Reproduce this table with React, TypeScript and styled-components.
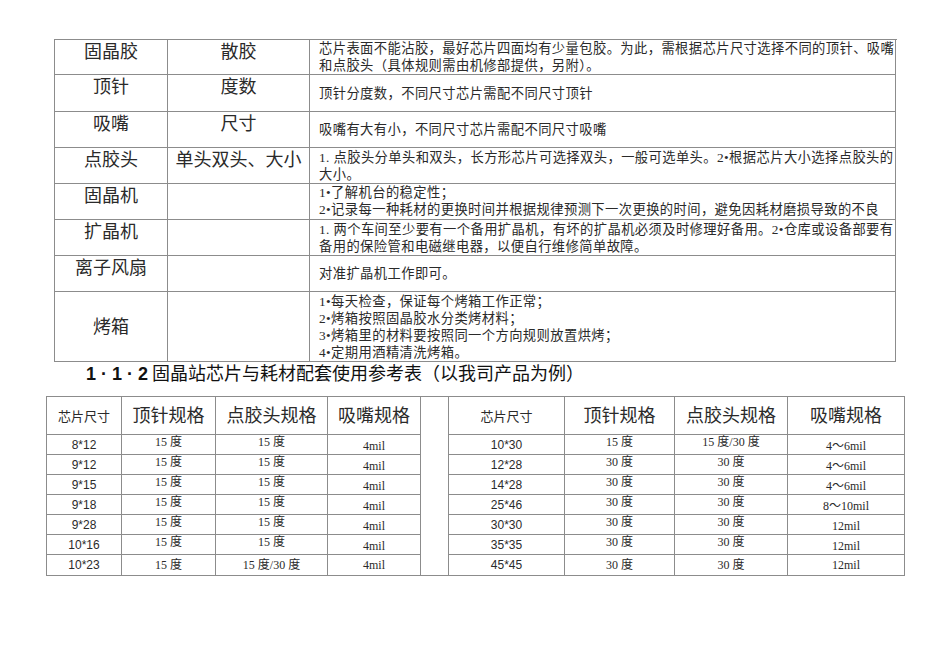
import React from "react";
import styled, { createGlobalStyle } from "styled-components";

const CJK = `"Liberation Serif", "Noto Sans CJK SC", serif`;
const SANS = `"Liberation Sans", "Noto Sans CJK SC", sans-serif`;
const LINE = "#8c8c8c";

const GlobalStyle = createGlobalStyle`
  html, body {
    margin: 0;
    padding: 0;
    background: #ffffff;
  }
  body {
    font-family: ${CJK};
    color: #1a1a1a;
  }
`;

type Rule = {
  item: string;
  param: string;
  lines: string[];
  height: number;
  top?: boolean;
};

const rules: Rule[] = [
  {
    item: "固晶胶",
    param: "散胶",
    height: 35,
    lines: [
      "芯片表面不能沾胶，最好芯片四面均有少量包胶。为此，需根据芯片尺寸选择不同的顶针、吸嘴",
      "和点胶头（具体规则需由机修部提供，另附）。",
    ],
  },
  { item: "顶针", param: "度数", height: 37, lines: ["顶针分度数，不同尺寸芯片需配不同尺寸顶针"] },
  { item: "吸嘴", param: "尺寸", height: 36, lines: ["吸嘴有大有小，不同尺寸芯片需配不同尺寸吸嘴"] },
  {
    item: "点胶头",
    param: "单头双头、大小",
    height: 36,
    lines: [
      "1. 点胶头分单头和双头，长方形芯片可选择双头，一般可选单头。2•根据芯片大小选择点胶头的",
      "大小。",
    ],
  },
  {
    item: "固晶机",
    param: "",
    height: 36,
    top: true,
    lines: [
      "1•了解机台的稳定性；",
      "2•记录每一种耗材的更换时间并根据规律预测下一次更换的时间，避免因耗材磨损导致的不良",
      "品率上升。",
    ],
  },
  {
    item: "扩晶机",
    param: "",
    height: 36,
    lines: [
      "1. 两个车间至少要有一个备用扩晶机，有坏的扩晶机必须及时修理好备用。2•仓库或设备部要有",
      "备用的保险管和电磁继电器，以便自行维修简单故障。",
    ],
  },
  { item: "离子风扇", param: "", height: 36, lines: ["对准扩晶机工作即可。"] },
  {
    item: "烤箱",
    param: "",
    height: 70,
    lines: [
      "1•每天检查，保证每个烤箱工作正常；",
      "2•烤箱按照固晶胶水分类烤材料；",
      "3•烤箱里的材料要按照同一个方向规则放置烘烤；",
      "4•定期用酒精清洗烤箱。",
    ],
  },
];

type Spec = [string, string, string, string];

const leftSpecs: Spec[] = [
  ["8*12", "15 度", "15 度", "4mil"],
  ["9*12", "15 度", "15 度", "4mil"],
  ["9*15", "15 度", "15 度", "4mil"],
  ["9*18", "15 度", "15 度", "4mil"],
  ["9*28", "15 度", "15 度", "4mil"],
  ["10*16", "15 度", "15 度", "4mil"],
  ["10*23", "15 度", "15 度/30 度", "4mil"],
];

const rightSpecs: Spec[] = [
  ["10*30", "15 度", "15 度/30 度", "4～6mil"],
  ["12*28", "30 度", "30 度", "4～6mil"],
  ["14*28", "30 度", "30 度", "4～6mil"],
  ["25*46", "30 度", "30 度", "8～10mil"],
  ["30*30", "30 度", "30 度", "12mil"],
  ["35*35", "30 度", "30 度", "12mil"],
  ["45*45", "30 度", "30 度", "12mil"],
];

const Page = styled.div`
  width: 950px;
  padding-top: 39px;
  padding-bottom: 80px;
`;

const RuleTable = styled.div`
  margin-left: 54px;
  width: 842px;
  border-top: 1px solid ${LINE};
  border-left: 1px solid ${LINE};
`;

const RuleRow = styled.div<{ $h: number }>`
  display: grid;
  grid-template-columns: 113px 142px 586px;
  height: ${(p) => p.$h}px;
  box-sizing: border-box;
`;

const LabelCell = styled.div<{ $center?: boolean }>`
  box-sizing: border-box;
  border-right: 1px solid ${LINE};
  border-bottom: 1px solid ${LINE};
  display: flex;
  justify-content: center;
  align-items: ${(p) => (p.$center ? "center" : "flex-start")};
  padding-top: 1px;
  font-family: ${CJK};
  font-size: 18px;
  line-height: 22px;
  color: #2a2a2a;
  white-space: nowrap;
`;

const NoteCell = styled.div<{ $top?: boolean }>`
  box-sizing: border-box;
  border-right: 1px solid ${LINE};
  border-bottom: 1px solid ${LINE};
  display: flex;
  flex-direction: column;
  justify-content: ${(p) => (p.$top ? "flex-start" : "center")};
  padding: 0 0 0 9px;
  overflow: hidden;
  font-family: ${CJK};
  font-size: 13.3px;
  letter-spacing: 0.4px;
  line-height: 17px;
  color: #2a2a2a;
`;

const NoteLine = styled.div`
  white-space: nowrap;
  flex: none;
`;

const Heading = styled.h2`
  margin: 0 0 10px 86px;
  height: 24px;
  font-family: ${CJK};
  font-size: 18px;
  line-height: 24px;
  font-weight: normal;
  color: #111;
  white-space: nowrap;

  b {
    font-family: "Liberation Sans", sans-serif;
    font-weight: bold;
    margin-right: 4px;
  }
`;

const SpecFrame = styled.div`
  margin-left: 46px;
  width: 859px;
  display: flex;
  border-top: 1px solid ${LINE};
  border-bottom: 1px solid ${LINE};
  border-left: 1px solid ${LINE};
  box-sizing: border-box;
`;

const SpecGrid = styled.div<{ $cols: string }>`
  display: grid;
  grid-template-columns: ${(p) => p.$cols};
  grid-template-rows: 38px repeat(7, 20px);
`;

const Gap = styled.div`
  width: 29px;
  box-sizing: border-box;
  border-right: 1px solid ${LINE};
`;

const HeadCell = styled.div<{ $small?: boolean }>`
  box-sizing: border-box;
  border-right: 1px solid ${LINE};
  border-bottom: 1px solid ${LINE};
  display: flex;
  align-items: center;
  justify-content: center;
  padding-bottom: ${(p) => (p.$small ? "0" : "4px")};
  font-family: ${CJK};
  font-size: ${(p) => (p.$small ? "13px" : "18px")};
  color: #2a2a2a;
  white-space: nowrap;
`;

const DataCell = styled.div<{ $last?: boolean; $shift: number; $sans?: boolean }>`
  box-sizing: border-box;
  border-right: 1px solid ${LINE};
  border-bottom: ${(p) => (p.$last ? "none" : `1px solid ${LINE}`)};
  display: flex;
  align-items: center;
  justify-content: center;
  font-family: ${(p) => (p.$sans ? SANS : CJK)};
  font-size: 12px;
  line-height: 14px;
  color: #2a2a2a;
  white-space: nowrap;

  span {
    position: relative;
    top: ${(p) => p.$shift}px;
  }
`;

const headers = ["芯片尺寸", "顶针规格", "点胶头规格", "吸嘴规格"];

const SpecTable = ({ rows, cols }: { rows: Spec[]; cols: string }) => (
  <SpecGrid $cols={cols}>
    {headers.map((h, i) => (
      <HeadCell key={h} $small={i === 0}>
        {h}
      </HeadCell>
    ))}
    {rows.map((row, r) => {
      const last = r === rows.length - 1;
      return row.map((value, c) => {
        let shift = 0;
        if (!last && (c === 1 || c === 2)) shift = -3;
        if (!last && c === 3) shift = 1;
        return (
          <DataCell key={`${r}-${c}`} $last={last} $shift={shift} $sans={c === 0}>
            <span>{value}</span>
          </DataCell>
        );
      });
    })}
  </SpecGrid>
);

export default function App() {
  return (
    <>
      <GlobalStyle />
      <Page>
        <RuleTable>
          {rules.map((rule) => {
            const tall = rule.height > 60;
            return (
              <RuleRow key={rule.item} $h={rule.height}>
                <LabelCell $center={tall}>{rule.item}</LabelCell>
                <LabelCell $center={tall}>{rule.param}</LabelCell>
                <NoteCell $top={rule.top}>
                  {rule.lines.map((line) => (
                    <NoteLine key={line}>{line}</NoteLine>
                  ))}
                </NoteCell>
              </RuleRow>
            );
          })}
        </RuleTable>

        <Heading>
          <b>1 · 1 · 2</b>固晶站芯片与耗材配套使用参考表（以我司产品为例）
        </Heading>

        <SpecFrame>
          <SpecTable rows={leftSpecs} cols="75px 94px 112px 93px" />
          <Gap />
          <SpecTable rows={rightSpecs} cols="116px 110px 113px 117px" />
        </SpecFrame>
      </Page>
    </>
  );
}
